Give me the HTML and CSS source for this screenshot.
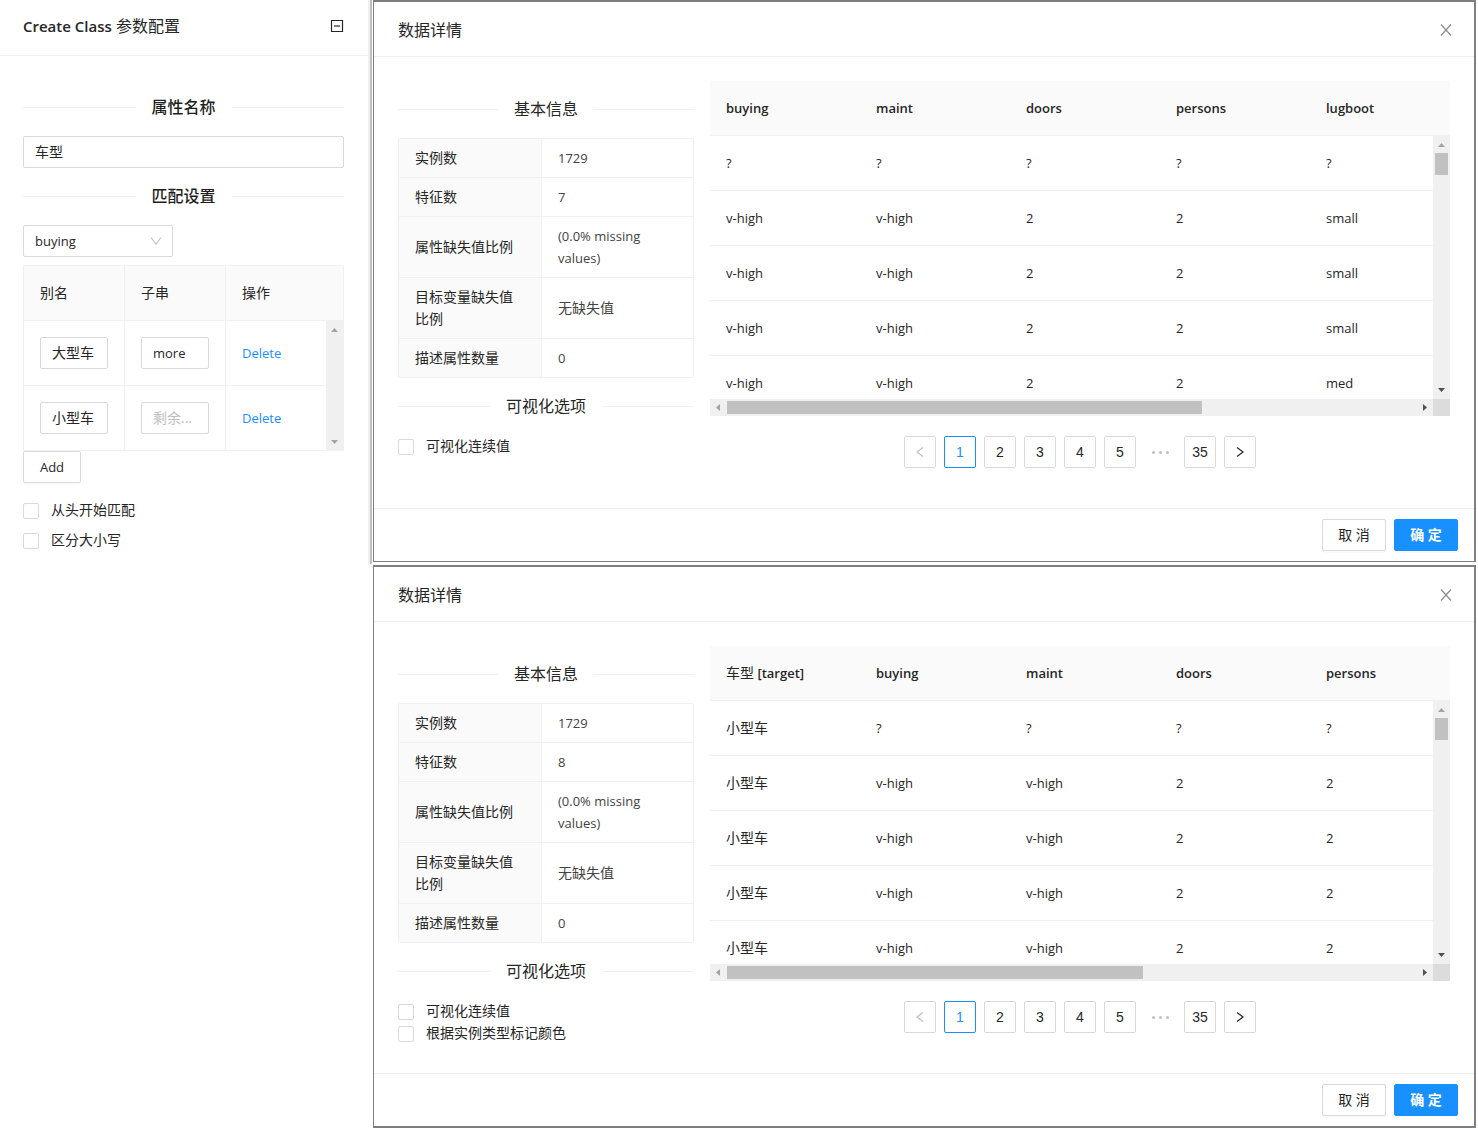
FILE: index.html
```html
<!DOCTYPE html>
<html lang="zh-CN">
<head>
<meta charset="utf-8">
<title>Create Class 参数配置</title>
<link rel="stylesheet" href="styles.css">
</head>
<body>
<svg class="sprite" aria-hidden="true">
  <symbol id="close" viewBox="0 0 12 12"><path d="M1 0.5 L11 11.5 M11 0.5 L1 11.5" fill="none" stroke="currentColor" stroke-width="1.2"/></symbol>
  <symbol id="left" viewBox="0 0 12 12"><path d="M9 1.5 L3 6 L9 10.5" fill="none" stroke="currentColor" stroke-width="1.2"/></symbol>
  <symbol id="right" viewBox="0 0 12 12"><path d="M3 1.5 L9 6 L3 10.5" fill="none" stroke="currentColor" stroke-width="1.2"/></symbol>
  <symbol id="down" viewBox="0 0 12 12"><path d="M1 2.5 L6 9 L11 2.5" fill="none" stroke="currentColor" stroke-width="1.1"/></symbol>
  <symbol id="tri-up" viewBox="0 0 17 17"><path d="M5 11 L8.500 7 L12 11 Z" fill="currentColor"/></symbol>
  <symbol id="tri-down" viewBox="0 0 17 17"><path d="M5 6 L8.500 10 L12 6 Z" fill="currentColor"/></symbol>
  <symbol id="tri-left" viewBox="0 0 17 17"><path d="M10 5 L6 8.500 L10 12 Z" fill="currentColor"/></symbol>
  <symbol id="tri-right" viewBox="0 0 17 17"><path d="M7 5 L11 8.500 L7 12 Z" fill="currentColor"/></symbol>
</svg>

<div class="page">
  <aside class="panel">
    <header class="panel-head">
      <h1 class="panel-title"><span class="latin">Create Class</span> 参数配置</h1>
      <button class="icon-btn" type="button" aria-label="收起">
        <svg width="14" height="14" viewBox="0 0 14 14"><path d="M1.500 1.500 H12.500 V12.500 H1.500 Z" fill="none" stroke="currentColor" stroke-width="1.2"/><path d="M4 7 H10" stroke="currentColor" stroke-width="1.2"/></svg>
      </button>
    </header>
    <div class="panel-body">
      <h2 class="divider strong" id="attr-name">属性名称</h2>
      <input class="input" type="text" value="车型" aria-labelledby="attr-name">
      <h2 class="divider strong" id="match-set">匹配设置</h2>
      <div class="select-wrap">
        <select class="input select" aria-labelledby="match-set"><option>buying</option></select>
        <svg class="select-arrow" width="12" height="12"><use href="#down"/></svg>
      </div>
      <div class="alias">
        <table class="alias-table">
          <colgroup><col class="alias-col"><col class="alias-col"><col></colgroup>
          <thead><tr><th>别名</th><th>子串</th><th>操作</th></tr></thead>
          <tbody>
            <tr>
              <td><input class="input" type="text" value="大型车" aria-label="别名"></td>
              <td><input class="input latin" type="text" value="more" aria-label="子串"></td>
              <td><a class="latin" href="#">Delete</a></td>
            </tr>
            <tr>
              <td><input class="input" type="text" value="小型车" aria-label="别名"></td>
              <td><input class="input" type="text" placeholder="剩余..." aria-label="子串"></td>
              <td><a class="latin" href="#">Delete</a></td>
            </tr>
          </tbody>
        </table>
        <div class="alias-scroll">
          <svg width="17" height="17"><use href="#tri-up"/></svg>
          <svg width="17" height="17"><use href="#tri-down"/></svg>
        </div>
      </div>
      <button class="btn latin" type="button">Add</button>
      <div class="panel-checks">
        <label class="check"><input type="checkbox">从头开始匹配</label>
        <label class="check"><input type="checkbox">区分大小写</label>
      </div>
    </div>
  </aside>

  <main class="modals">
    <section class="modal">
      <header class="modal-head">
        <h1 class="modal-title">数据详情</h1>
        <button class="icon-btn close" type="button" aria-label="关闭"><svg width="12" height="12"><use href="#close"/></svg></button>
      </header>
      <div class="modal-body">
        <div class="info">
          <h2 class="divider">基本信息</h2>
          <table class="info-table">
            <tr><th>实例数</th><td>1729</td></tr>
            <tr><th>特征数</th><td>7</td></tr>
            <tr><th>属性缺失值比例</th><td>(0.0% missing values)</td></tr>
            <tr><th>目标变量缺失值比例</th><td class="cjk">无缺失值</td></tr>
            <tr><th>描述属性数量</th><td>0</td></tr>
          </table>
          <h2 class="divider">可视化选项</h2>
          <label class="check"><input type="checkbox">可视化连续值</label>
        </div>
        <div class="data">
          <div class="data-clip">
            <table class="data-table">
              <thead><tr><th>buying</th><th>maint</th><th>doors</th><th>persons</th><th>lugboot</th></tr></thead>
            </table>
          </div>
          <div class="data-view">
            <div class="data-clip data-rows">
              <table class="data-table">
                <tbody>
                  <tr><td>?</td><td>?</td><td>?</td><td>?</td><td>?</td></tr>
                  <tr><td>v-high</td><td>v-high</td><td>2</td><td>2</td><td>small</td></tr>
                  <tr><td>v-high</td><td>v-high</td><td>2</td><td>2</td><td>small</td></tr>
                  <tr><td>v-high</td><td>v-high</td><td>2</td><td>2</td><td>small</td></tr>
                  <tr><td>v-high</td><td>v-high</td><td>2</td><td>2</td><td>med</td></tr>
                </tbody>
              </table>
            </div>
            <div class="bar-v">
              <svg width="17" height="17"><use href="#tri-up"/></svg>
              <div class="thumb-v"></div>
              <svg class="on" width="17" height="17"><use href="#tri-down"/></svg>
            </div>
            <div class="bar-h">
              <svg width="17" height="17"><use href="#tri-left"/></svg>
              <div class="track-h"><div class="thumb-h" style="width:69%"></div></div>
              <svg class="on" width="17" height="17"><use href="#tri-right"/></svg>
            </div>
            <div class="corner"></div>
          </div>
          <nav class="pager" aria-label="分页">
            <button class="page-btn" type="button" disabled aria-label="上一页"><svg width="12" height="12"><use href="#left"/></svg></button>
            <button class="page-btn current" type="button">1</button>
            <button class="page-btn" type="button">2</button>
            <button class="page-btn" type="button">3</button>
            <button class="page-btn" type="button">4</button>
            <button class="page-btn" type="button">5</button>
            <span class="page-gap"><i></i><i></i><i></i></span>
            <button class="page-btn" type="button">35</button>
            <button class="page-btn" type="button" aria-label="下一页"><svg width="12" height="12"><use href="#right"/></svg></button>
          </nav>
        </div>
      </div>
      <footer class="modal-foot">
        <button class="btn" type="button">取 消</button>
        <button class="btn primary" type="button">确 定</button>
      </footer>
    </section>

    <section class="modal last">
      <header class="modal-head">
        <h1 class="modal-title">数据详情</h1>
        <button class="icon-btn close" type="button" aria-label="关闭"><svg width="12" height="12"><use href="#close"/></svg></button>
      </header>
      <div class="modal-body">
        <div class="info">
          <h2 class="divider">基本信息</h2>
          <table class="info-table">
            <tr><th>实例数</th><td>1729</td></tr>
            <tr><th>特征数</th><td>8</td></tr>
            <tr><th>属性缺失值比例</th><td>(0.0% missing values)</td></tr>
            <tr><th>目标变量缺失值比例</th><td class="cjk">无缺失值</td></tr>
            <tr><th>描述属性数量</th><td>0</td></tr>
          </table>
          <h2 class="divider">可视化选项</h2>
          <label class="check"><input type="checkbox">可视化连续值</label>
          <label class="check"><input type="checkbox">根据实例类型标记颜色</label>
        </div>
        <div class="data">
          <div class="data-clip">
            <table class="data-table">
              <thead><tr><th><span class="cjk">车型</span> [target]</th><th>buying</th><th>maint</th><th>doors</th><th>persons</th></tr></thead>
            </table>
          </div>
          <div class="data-view">
            <div class="data-clip data-rows">
              <table class="data-table">
                <tbody>
                  <tr><td class="cjk">小型车</td><td>?</td><td>?</td><td>?</td><td>?</td></tr>
                  <tr><td class="cjk">小型车</td><td>v-high</td><td>v-high</td><td>2</td><td>2</td></tr>
                  <tr><td class="cjk">小型车</td><td>v-high</td><td>v-high</td><td>2</td><td>2</td></tr>
                  <tr><td class="cjk">小型车</td><td>v-high</td><td>v-high</td><td>2</td><td>2</td></tr>
                  <tr><td class="cjk">小型车</td><td>v-high</td><td>v-high</td><td>2</td><td>2</td></tr>
                </tbody>
              </table>
            </div>
            <div class="bar-v">
              <svg width="17" height="17"><use href="#tri-up"/></svg>
              <div class="thumb-v"></div>
              <svg class="on" width="17" height="17"><use href="#tri-down"/></svg>
            </div>
            <div class="bar-h">
              <svg width="17" height="17"><use href="#tri-left"/></svg>
              <div class="track-h"><div class="thumb-h" style="width:60.400%"></div></div>
              <svg class="on" width="17" height="17"><use href="#tri-right"/></svg>
            </div>
            <div class="corner"></div>
          </div>
          <nav class="pager" aria-label="分页">
            <button class="page-btn" type="button" disabled aria-label="上一页"><svg width="12" height="12"><use href="#left"/></svg></button>
            <button class="page-btn current" type="button">1</button>
            <button class="page-btn" type="button">2</button>
            <button class="page-btn" type="button">3</button>
            <button class="page-btn" type="button">4</button>
            <button class="page-btn" type="button">5</button>
            <span class="page-gap"><i></i><i></i><i></i></span>
            <button class="page-btn" type="button">35</button>
            <button class="page-btn" type="button" aria-label="下一页"><svg width="12" height="12"><use href="#right"/></svg></button>
          </nav>
        </div>
      </div>
      <footer class="modal-foot">
        <button class="btn" type="button">取 消</button>
        <button class="btn primary" type="button">确 定</button>
      </footer>
    </section>
  </main>
</div>
</body>
</html>
```
FILE: styles.css
```css
* {
  box-sizing: border-box;
}

body {
  margin: 0;
  background: #fff;
  color: #262626;
  font: 14px/22px "Open Sans", "Noto Sans CJK SC", sans-serif;
}

h1,
h2 {
  margin: 0;
  font-weight: 400;
}

input,
select,
button {
  font: inherit;
  color: inherit;
}

table {
  border-collapse: separate;
  border-spacing: 0;
  table-layout: fixed;
  width: 100%;
}

th,
td {
  text-align: left;
  font-weight: 400;
}

svg {
  display: block;
}

.sprite {
  display: none;
}

.latin {
  font-size: 13px;
}

.page {
  display: flex;
  align-items: flex-start;
  gap: 1px;
  padding-right: 2px;
}

/* Left settings panel */

.panel {
  flex: 0 0 372px;
  border-right: 2px solid #bfbfbf;
  box-shadow: inset -2px 0 #f0f0f0;
  padding-bottom: 13px;
}

.panel-head {
  display: flex;
  align-items: center;
  justify-content: space-between;
  height: 56px;
  margin-right: 2px;
  padding: 0 24px 3px 23px;
  border-bottom: 1px solid #f0f0f0;
}

.panel-title {
  font-size: 16px;
}

.panel-title .latin {
  font-size: 15px;
  font-weight: 600;
}

.panel-body {
  padding: 23px 26px 0 23px;
}

.icon-btn {
  padding: 0;
  border: 0;
  background: none;
}

.close {
  color: #8c8c8c;
}

.divider {
  display: flex;
  align-items: center;
  gap: 16px;
  margin: 16px 0;
  font-size: 16px;
  line-height: 25px;
}

.divider::before,
.divider::after {
  content: "";
  flex: 1;
  border-top: 1px solid #f0f0f0;
}

.divider.strong {
  font-weight: 500;
  color: #1f1f1f;
}

.input {
  display: block;
  width: 100%;
  height: 32px;
  padding: 3px 11px 5px;
  border: 1px solid #d9d9d9;
  border-radius: 2px;
  background: #fff;
}

.input::placeholder {
  color: #bfbfbf;
}

.input.latin {
  padding: 4px 11px;
}

.select-wrap {
  position: relative;
  width: 150px;
  margin-bottom: 8px;
}

.select {
  appearance: none;
  padding: 4px 11px;
  font-size: 13px;
}

.select-arrow {
  position: absolute;
  top: 10px;
  right: 11px;
  color: #bfbfbf;
  pointer-events: none;
}

.alias {
  position: relative;
}

.alias-table {
  border-top: 1px solid #f0f0f0;
  border-left: 1px solid #f0f0f0;
}

.alias-col {
  width: 101px;
}

.alias-table th,
.alias-table td {
  padding: 16px;
  border-right: 1px solid #f0f0f0;
  border-bottom: 1px solid #f0f0f0;
}

.alias-table th {
  background: #fafafa;
}

.alias-table a {
  color: #1890ff;
  text-decoration: none;
}

.alias-scroll {
  position: absolute;
  top: 56px;
  right: 0;
  bottom: 0;
  width: 18px;
  display: flex;
  flex-direction: column;
  justify-content: space-between;
  background: #f0f0f0;
  color: #a3a3a3;
}

.btn {
  display: block;
  min-width: 58px;
  height: 32px;
  padding: 4px 15px;
  border: 1px solid #d9d9d9;
  border-radius: 2px;
  background: #fff;
  box-shadow: 0 2px 0 rgba(0, 0, 0, 0.02);
}

.btn.primary {
  border-color: #1890ff;
  background: #1890ff;
  color: #fff;
  font-weight: 600;
}

.panel-checks {
  display: grid;
  gap: 8px;
  margin-top: 16px;
}

.check {
  display: flex;
  align-items: center;
  gap: 12px;
}

.check input {
  appearance: none;
  width: 16px;
  height: 16px;
  margin: 2px 0 0;
  border: 1px solid #d9d9d9;
  border-radius: 2px;
  background: #fff;
}

/* Data detail dialogs */

.modals {
  flex: 1;
  min-width: 0;
  display: grid;
  gap: 3px;
}

.modal {
  border: solid #7f7f7f;
  border-width: 2px 2px 1px 1px;
}

.modal.last {
  border-bottom-width: 2px;
}

.modal-head {
  display: flex;
  align-items: center;
  justify-content: space-between;
  height: 55px;
  padding: 2px 22px 0 24px;
  border-bottom: 1px solid #f0f0f0;
}

.modal-title {
  font-size: 16px;
}

.modal-body {
  display: grid;
  grid-template-columns: 296px minmax(0, 1fr);
  gap: 16px;
  padding: 24px;
}

.info-table {
  border: 1px solid #f0f0f0;
  border-radius: 2px;
}

.info-table th,
.info-table td {
  padding: 8px 16px;
  border-bottom: 1px solid #f0f0f0;
}

.info-table tr:last-child th,
.info-table tr:last-child td {
  border-bottom: 0;
}

.info-table th {
  width: 143px;
  background: #fafafa;
  border-right: 1px solid #f0f0f0;
}

.info-table td {
  color: #434343;
  font-size: 13px;
}

.data-clip {
  overflow: hidden;
}

.data-clip:first-child {
  background: #fafafa;
}

.data-table {
  min-width: 750px;
  font-size: 13px;
}

.data-table th,
.data-table td {
  padding: 16px;
  border-bottom: 1px solid #f0f0f0;
}

.data-table th {
  height: 55px;
  background: #fafafa;
  font-weight: 600;
}

.info-table .cjk,
.data-table .cjk {
  font-size: 14px;
  font-weight: 400;
}

.data-view {
  display: grid;
  grid-template-columns: minmax(0, 1fr) 17px;
}

.data-rows {
  max-height: 263px;
}

.data-view .data-rows {
  background: #fff;
}

.bar-v,
.bar-h {
  display: flex;
  background: #f0f0f0;
  color: #a3a3a3;
}

.bar-v {
  flex-direction: column;
}

.bar-v .on {
  margin-top: auto;
}

.bar-v .on,
.bar-h .on {
  color: #505050;
}

.thumb-v {
  height: 22px;
  margin: 0 2px;
  background: #c1c1c1;
}

.track-h {
  flex: 1;
  padding: 2px 0;
}

.thumb-h {
  height: 13px;
  background: #c1c1c1;
}

.corner {
  background: #dcdcdc;
}

.pager {
  display: flex;
  justify-content: center;
  gap: 8px;
  margin: 20px 0 16px;
}

.page-btn,
.page-gap {
  display: flex;
  align-items: center;
  justify-content: center;
  width: 32px;
  height: 32px;
}

.page-btn {
  padding: 0;
  border: 1px solid #d9d9d9;
  border-radius: 2px;
  background: #fff;
  font-family: "Liberation Sans", Arial, sans-serif;
}

.page-btn:disabled {
  color: #bfbfbf;
}

.page-btn.current {
  border-color: #1890ff;
  color: #1890ff;
}

.page-gap {
  gap: 4px;
}

.page-gap i {
  width: 3px;
  height: 3px;
  border-radius: 50%;
  background: #bfbfbf;
}

.modal-foot {
  display: flex;
  justify-content: flex-end;
  gap: 8px;
  padding: 10px 16px;
  border-top: 1px solid #f0f0f0;
}

.modal-foot .btn {
  min-width: 64px;
}
```
